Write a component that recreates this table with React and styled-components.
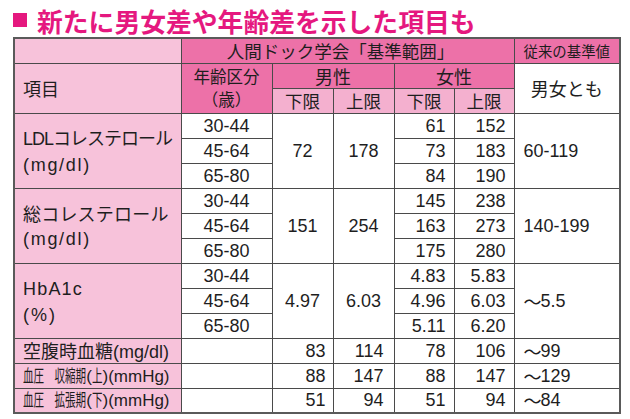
import styled, { createGlobalStyle } from 'styled-components';

const GlobalStyle = createGlobalStyle`
  html, body {
    margin: 0;
    padding: 0;
    background: #fff;
  }
  body {
    font-family: "Liberation Sans", "Noto Sans CJK JP", sans-serif;
    color: #1e1e1e;
  }
`;

const PINK_DARK = '#ed71a8';
const PINK_SUB = '#f4b0cf';
const PINK_LIGHT = '#f7c2da';
const LINE = '#4a4a4a';

const Page = styled.div`
  padding: 3px 0 0 13px;
  width: 606px;
`;

const Title = styled.h1`
  display: flex;
  align-items: center;
  margin: 0;
  height: 34px;
  font-family: "Noto Sans CJK JP", sans-serif;
  font-size: 25.8px;
  font-weight: 700;
  color: #e5187f;
`;

const Square = styled.span`
  width: 14px;
  height: 14px;
  margin-right: 10px;
  background: #e5187f;
  flex: none;
`;

const Table = styled.table`
  width: 606px;
  table-layout: fixed;
  border-collapse: collapse;
  border: 2px solid #5a5a5a;
`;

const Row = styled.tr`
  height: 25px;
`;

const tones = {
  dark: PINK_DARK,
  sub: PINK_SUB,
  light: PINK_LIGHT,
  white: '#fff',
};

const Head = styled.th`
  padding: 0;
  border: 1px solid ${LINE};
  background: ${(p) => tones[p.$tone || 'dark']};
  font-family: "Noto Sans CJK JP", sans-serif;
  font-weight: 400;
  font-size: ${(p) => p.$size || 17.5}px;
  line-height: 20px;
  text-align: ${(p) => p.$align || 'center'};
  padding-left: ${(p) => (p.$align === 'left' ? 8 : 0)}px;
  padding-right: ${(p) => p.$shift || 0}px;
  vertical-align: middle;
  white-space: nowrap;
`;

const HeadLine = styled.div`
  font-size: 16.5px;
  height: 23px;
  line-height: 23px;
`;

const Item = styled.td`
  padding: 0 0 0 8px;
  border: 1px solid ${LINE};
  background: ${PINK_LIGHT};
  font-family: "Noto Sans CJK JP", sans-serif;
  font-size: 18px;
  line-height: ${(p) => (p.rowSpan > 1 ? 24 : 20)}px;
  vertical-align: middle;
  white-space: nowrap;
`;

const ItemLine = styled.div`
  letter-spacing: ${(p) => p.$spread || 0}px;
`;

const Latin = styled.span`
  font-family: "Liberation Sans", sans-serif;
`;

const Narrow = styled.span`
  display: inline-block;
  vertical-align: top;
  transform: scaleX(0.62);
  transform-origin: left center;
  margin-right: ${(p) => p.$n * -0.38}em;
`;

const SmallItem = styled(Item)`
  font-size: 17px;
  line-height: 20px;
`;

const Num = styled.td`
  padding: 0 ${(p) => (p.$align === 'right' ? p.$pad ?? 8 : 0)}px 0
    ${(p) => (p.$align === 'left' ? 9 : 0)}px;
  border: 1px solid ${LINE};
  background: #fff;
  font-family: "Liberation Sans", "Noto Sans CJK JP", sans-serif;
  font-size: 18px;
  line-height: 20px;
  text-align: ${(p) => p.$align || 'center'};
  vertical-align: middle;
  white-space: nowrap;
`;

const Tilde = styled.span`
  font-family: "Noto Sans CJK JP", sans-serif;
  display: inline-block;
  vertical-align: top;
  width: 17px;
`;

const groups = [
  {
    label: <ItemLine $spread={-1}><Latin>LDL</Latin>コレステロール</ItemLine>,
    unit: '(mg/dl)',
    male: ['72', '178'],
    female: [['61', '152'], ['73', '183'], ['84', '190']],
    old: '60-119',
  },
  {
    label: <ItemLine $spread={0.2}>総コレステロール</ItemLine>,
    unit: '(mg/dl)',
    male: ['151', '254'],
    female: [['145', '238'], ['163', '273'], ['175', '280']],
    old: '140-199',
  },
  {
    label: <ItemLine $spread={1.2}><Latin>HbA1c</Latin></ItemLine>,
    unit: '(%)',
    male: ['4.97', '6.03'],
    female: [['4.83', '5.83'], ['4.96', '6.03'], ['5.11', '6.20']],
    old: <><Tilde>〜</Tilde>5.5</>,
  },
];

const ages = ['30-44', '45-64', '65-80'];

const singles = [
  {
    label: <ItemLine>空腹時血糖<Latin>(mg/dl)</Latin></ItemLine>,
    vals: ['83', '114', '78', '106'],
    old: '99',
  },
  {
    label: (
      <ItemLine>
        <Narrow $n={2}>血圧</Narrow>
        <Narrow $n={4}>　収縮期</Narrow>
        <Latin>(</Latin><Narrow $n={1}>上</Narrow><Latin>)(mmHg)</Latin>
      </ItemLine>
    ),
    small: true,
    vals: ['88', '147', '88', '147'],
    old: '129',
  },
  {
    label: (
      <ItemLine>
        <Narrow $n={2}>血圧</Narrow>
        <Narrow $n={4}>　拡張期</Narrow>
        <Latin>(</Latin><Narrow $n={1}>下</Narrow><Latin>)(mmHg)</Latin>
      </ItemLine>
    ),
    small: true,
    vals: ['51', '94', '51', '94'],
    old: '84',
  },
];

export default function App() {
  return (
    <>
      <GlobalStyle />
      <Page>
        <Title>
          <Square />
          新たに男女差や年齢差を示した項目も
        </Title>
        <Table>
          <colgroup>
            <col style={{ width: 167 }} />
            <col style={{ width: 91 }} />
            <col style={{ width: 61 }} />
            <col style={{ width: 61 }} />
            <col style={{ width: 60 }} />
            <col style={{ width: 60 }} />
            <col style={{ width: 106 }} />
          </colgroup>
          <thead>
            <Row>
              <Head $tone="light" />
              <Head colSpan={5} $shift={14}>人間ドック学会「基準範囲」</Head>
              <Head $size={14.4}>従来の基準値</Head>
            </Row>
            <Row>
              <Head $tone="light" $align="left" rowSpan={2} $size={18}>項目</Head>
              <Head rowSpan={2}>
                <HeadLine>年齢区分</HeadLine>
                <HeadLine>（歳）</HeadLine>
              </Head>
              <Head colSpan={2} $size={18}>男性</Head>
              <Head colSpan={2} $size={18}>女性</Head>
              <Head $tone="white" rowSpan={2} $size={18}>男女とも</Head>
            </Row>
            <Row>
              <Head $tone="sub">下限</Head>
              <Head $tone="sub">上限</Head>
              <Head $tone="sub">下限</Head>
              <Head $tone="sub">上限</Head>
            </Row>
          </thead>
          <tbody>
            {groups.map((g, gi) =>
              ages.map((age, i) => (
                <Row key={`${gi}-${i}`}>
                  {i === 0 && (
                    <Item rowSpan={3}>
                      {g.label}
                      <ItemLine $spread={gi === 2 ? 2 : 1.7}><Latin>{g.unit}</Latin></ItemLine>
                    </Item>
                  )}
                  <Num>{age}</Num>
                  {i === 0 && <Num rowSpan={3}>{g.male[0]}</Num>}
                  {i === 0 && <Num rowSpan={3}>{g.male[1]}</Num>}
                  <Num $align="right">{g.female[i][0]}</Num>
                  <Num $align="right">{g.female[i][1]}</Num>
                  {i === 0 && <Num rowSpan={3} $align="left">{g.old}</Num>}
                </Row>
              ))
            )}
            {singles.map((s, si) => {
              const Label = s.small ? SmallItem : Item;
              return (
                <Row key={`s-${si}`}>
                  <Label>{s.label}</Label>
                  <Num />
                  <Num $align="right" $pad={7}>{s.vals[0]}</Num>
                  <Num $align="right" $pad={10}>{s.vals[1]}</Num>
                  <Num $align="right">{s.vals[2]}</Num>
                  <Num $align="right">{s.vals[3]}</Num>
                  <Num $align="left"><Tilde>〜</Tilde>{s.old}</Num>
                </Row>
              );
            })}
          </tbody>
        </Table>
      </Page>
    </>
  );
}
